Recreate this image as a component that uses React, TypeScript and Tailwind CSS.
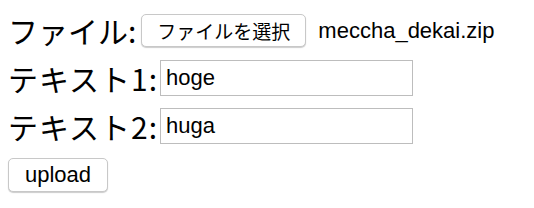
export default function App() {
  return (
    <div className="bg-white w-[534px] h-[208px] pl-2 pt-[6px] text-black font-['Liberation_Sans','Noto_Sans_CJK_JP',sans-serif]">
      <div className="flex items-center h-[48px]">
        <span className="text-[30px] leading-none font-['Noto_Sans_CJK_JP',sans-serif]">ファイル:</span>
        <button className="ml-[5px] h-[33px] px-[15px] bg-white border border-[#c8c8c8] rounded-[5px] shadow-[0_1px_1px_rgba(0,0,0,0.2)] text-[19px] leading-none font-['Noto_Sans_CJK_JP',sans-serif]">
          ファイルを選択
        </button>
        <span className="ml-[12px] text-[22px]">meccha_dekai.zip</span>
      </div>

      <div className="flex items-center h-[48px]">
        <span className="text-[30px] leading-none font-['Noto_Sans_CJK_JP',sans-serif] tracking-[1px]">テキスト1:</span>
        <input
          defaultValue="hoge"
          className="ml-[2px] w-[253px] h-[36px] border border-[#bdbdbd] px-[5px] text-[22px] outline-none"
        />
      </div>

      <div className="flex items-center h-[48px]">
        <span className="text-[30px] leading-none font-['Noto_Sans_CJK_JP',sans-serif] tracking-[1px]">テキスト2:</span>
        <input
          defaultValue="huga"
          className="ml-[2px] w-[253px] h-[36px] border border-[#bdbdbd] px-[5px] text-[22px] outline-none"
        />
      </div>

      <button className="mt-[8px] w-[100px] h-[34px] bg-white border border-[#c8c8c8] rounded-[5px] shadow-[0_1px_1px_rgba(0,0,0,0.2)] text-[22px] leading-none">
        upload
      </button>
    </div>
  )
}
